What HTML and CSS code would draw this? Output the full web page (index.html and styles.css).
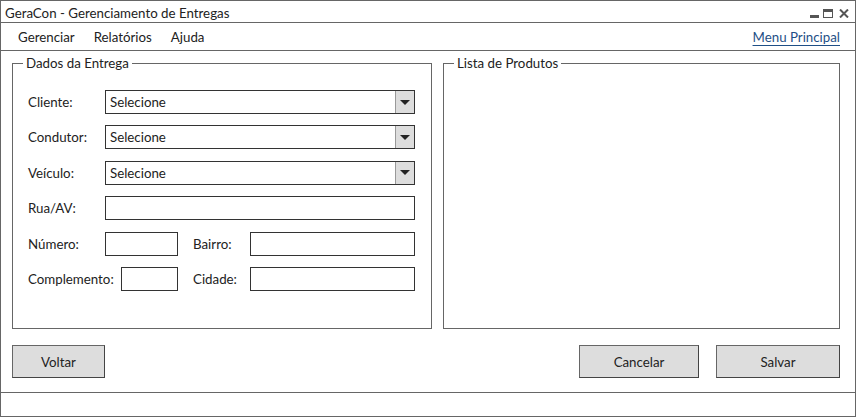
FILE: index.html
```html
<!DOCTYPE html>
<html lang="pt-BR">
<head>
<meta charset="utf-8">
<title>GeraCon - Gerenciamento de Entregas</title>
<link rel="stylesheet" href="styles.css">
</head>
<body>
<div class="window">
  <header class="titlebar">
    <span class="title">GeraCon - Gerenciamento de Entregas</span>
    <div class="controls">
      <span class="ctl-min"></span>
      <span class="ctl-max"></span>
      <svg class="ctl-close" width="10" height="9" viewBox="0 0 10 9"><path d="M1 0.5 L9 8.5 M9 0.5 L1 8.5" stroke="#555" stroke-width="2" fill="none"/></svg>
    </div>
  </header>
  <nav class="menubar">
    <ul class="menu">
      <li>Gerenciar</li>
      <li>Relatórios</li>
      <li>Ajuda</li>
    </ul>
    <a class="home-link" href="#">Menu Principal</a>
  </nav>
  <main class="content">
    <div class="panels">
      <fieldset class="group group-form">
        <legend>Dados da Entrega</legend>
        <div class="form">
          <div class="row">
            <span class="label">Cliente:</span>
            <div class="select"><span class="select-text">Selecione</span><span class="select-btn"><span class="caret"></span></span></div>
          </div>
          <div class="row">
            <span class="label">Condutor:</span>
            <div class="select"><span class="select-text">Selecione</span><span class="select-btn"><span class="caret"></span></span></div>
          </div>
          <div class="row">
            <span class="label">Veículo:</span>
            <div class="select"><span class="select-text">Selecione</span><span class="select-btn"><span class="caret"></span></span></div>
          </div>
          <div class="row">
            <span class="label">Rua/AV:</span>
            <div class="input input-fill"></div>
          </div>
          <div class="row">
            <div class="cell-left">
              <span class="label-plain">Número:</span>
              <div class="input input-num"></div>
            </div>
            <span class="label-right">Bairro:</span>
            <div class="input input-fill"></div>
          </div>
          <div class="row">
            <div class="cell-left">
              <span class="label-plain">Complemento:</span>
              <div class="input input-comp"></div>
            </div>
            <span class="label-right">Cidade:</span>
            <div class="input input-fill"></div>
          </div>
        </div>
      </fieldset>
      <fieldset class="group group-list">
        <legend>Lista de Produtos</legend>
      </fieldset>
    </div>
    <div class="actions">
      <button class="btn btn-back">Voltar</button>
      <div class="actions-right">
        <button class="btn btn-cancel">Cancelar</button>
        <button class="btn btn-save">Salvar</button>
      </div>
    </div>
  </main>
  <footer class="statusbar"></footer>
</div>
</body>
</html>
```

FILE: styles.css
```css
html, body {
  margin: 0;
  padding: 0;
  background: #fff;
}

body {
  font-family: "Lato", "Liberation Sans", sans-serif;
  font-size: 13.3px;
  color: #222;
}

.window {
  width: 856px;
  height: 417px;
  box-sizing: border-box;
  border: 1px solid #666;
  display: flex;
  flex-direction: column;
  background: #fff;
}

/* Title bar */
.titlebar {
  height: 22px;
  flex: none;
  border-bottom: 1px solid #666;
  display: flex;
  align-items: center;
  padding: 2px 6px 0 4px;
  box-sizing: border-box;
}

.title {
  line-height: 16px;
}

.controls {
  margin-left: auto;
  align-self: flex-end;
  margin-bottom: 4px;
  display: flex;
  align-items: flex-end;
}

.ctl-min {
  width: 9px;
  height: 3px;
  background: #555;
  margin-right: 4px;
}

.ctl-max {
  width: 10px;
  height: 9px;
  box-sizing: border-box;
  border: 1px solid #555;
  border-top-width: 3px;
  margin-right: 6px;
}

.ctl-close {
  display: block;
}

/* Menu bar */
.menubar {
  height: 27px;
  flex: none;
  border-bottom: 1px solid #666;
  display: flex;
  align-items: center;
  padding: 0 15px 0 17px;
}

.menu {
  list-style: none;
  margin: 0;
  padding: 0;
  display: flex;
  gap: 19px;
}

.home-link {
  margin-left: auto;
  color: #1f4f86;
  text-decoration: underline;
  text-underline-offset: 3px;
}

/* Content */
.content {
  flex: 1;
  display: flex;
  flex-direction: column;
  padding: 4px 15px 0 11px;
  min-height: 0;
}

.panels {
  display: flex;
  gap: 11px;
  height: 274px;
  flex: none;
}

.group {
  margin: 0;
  padding: 0;
  border: 1px solid #666;
  min-width: 0;
  box-sizing: border-box;
}

.group legend {
  margin-left: 10px;
  padding: 0 3px;
  line-height: 16px;
}

.group-form {
  width: 420px;
  flex: none;
}

.group-list {
  flex: 1;
}

.form {
  padding: 19px 16px 0 15px;
  display: flex;
  flex-direction: column;
  gap: 11.4px;
}

.row {
  display: flex;
  align-items: center;
  height: 24px;
}

.label {
  width: 77px;
  flex: none;
}

.select {
  flex: 1;
  height: 24px;
  box-sizing: border-box;
  border: 1px solid #333;
  display: flex;
  align-items: center;
}

.select-text {
  flex: 1;
  padding-left: 4px;
}

.select-btn {
  width: 18px;
  height: 100%;
  border-left: 1px solid #999;
  background: #ddd;
  display: flex;
  align-items: center;
  justify-content: center;
}

.caret {
  width: 0;
  height: 0;
  border-left: 5px solid transparent;
  border-right: 5px solid transparent;
  border-top: 5px solid #222;
}

.input {
  height: 24px;
  box-sizing: border-box;
  border: 1px solid #333;
}

.input-fill {
  flex: 1;
}

.cell-left {
  width: 150px;
  flex: none;
  display: flex;
  align-items: center;
  justify-content: space-between;
}

.input-num {
  width: 73px;
}

.input-comp {
  width: 57px;
}

.label-right {
  width: 57px;
  flex: none;
  margin-left: 15px;
}

/* Actions */
.actions {
  margin-top: 16px;
  display: flex;
  justify-content: space-between;
}

.actions-right {
  display: flex;
  gap: 17px;
}

.btn {
  height: 33px;
  box-sizing: border-box;
  border: 1px solid #666;
  border-right-color: #444;
  border-bottom-color: #444;
  background: #ddd;
  font-family: inherit;
  font-size: 13.3px;
  color: #222;
  padding: 0;
}

.btn-back {
  width: 93px;
}

.btn-cancel {
  width: 120px;
}

.btn-save {
  width: 124px;
}

/* Status bar */
.statusbar {
  height: 24px;
  flex: none;
  box-sizing: border-box;
  border-top: 1px solid #666;
}
```
